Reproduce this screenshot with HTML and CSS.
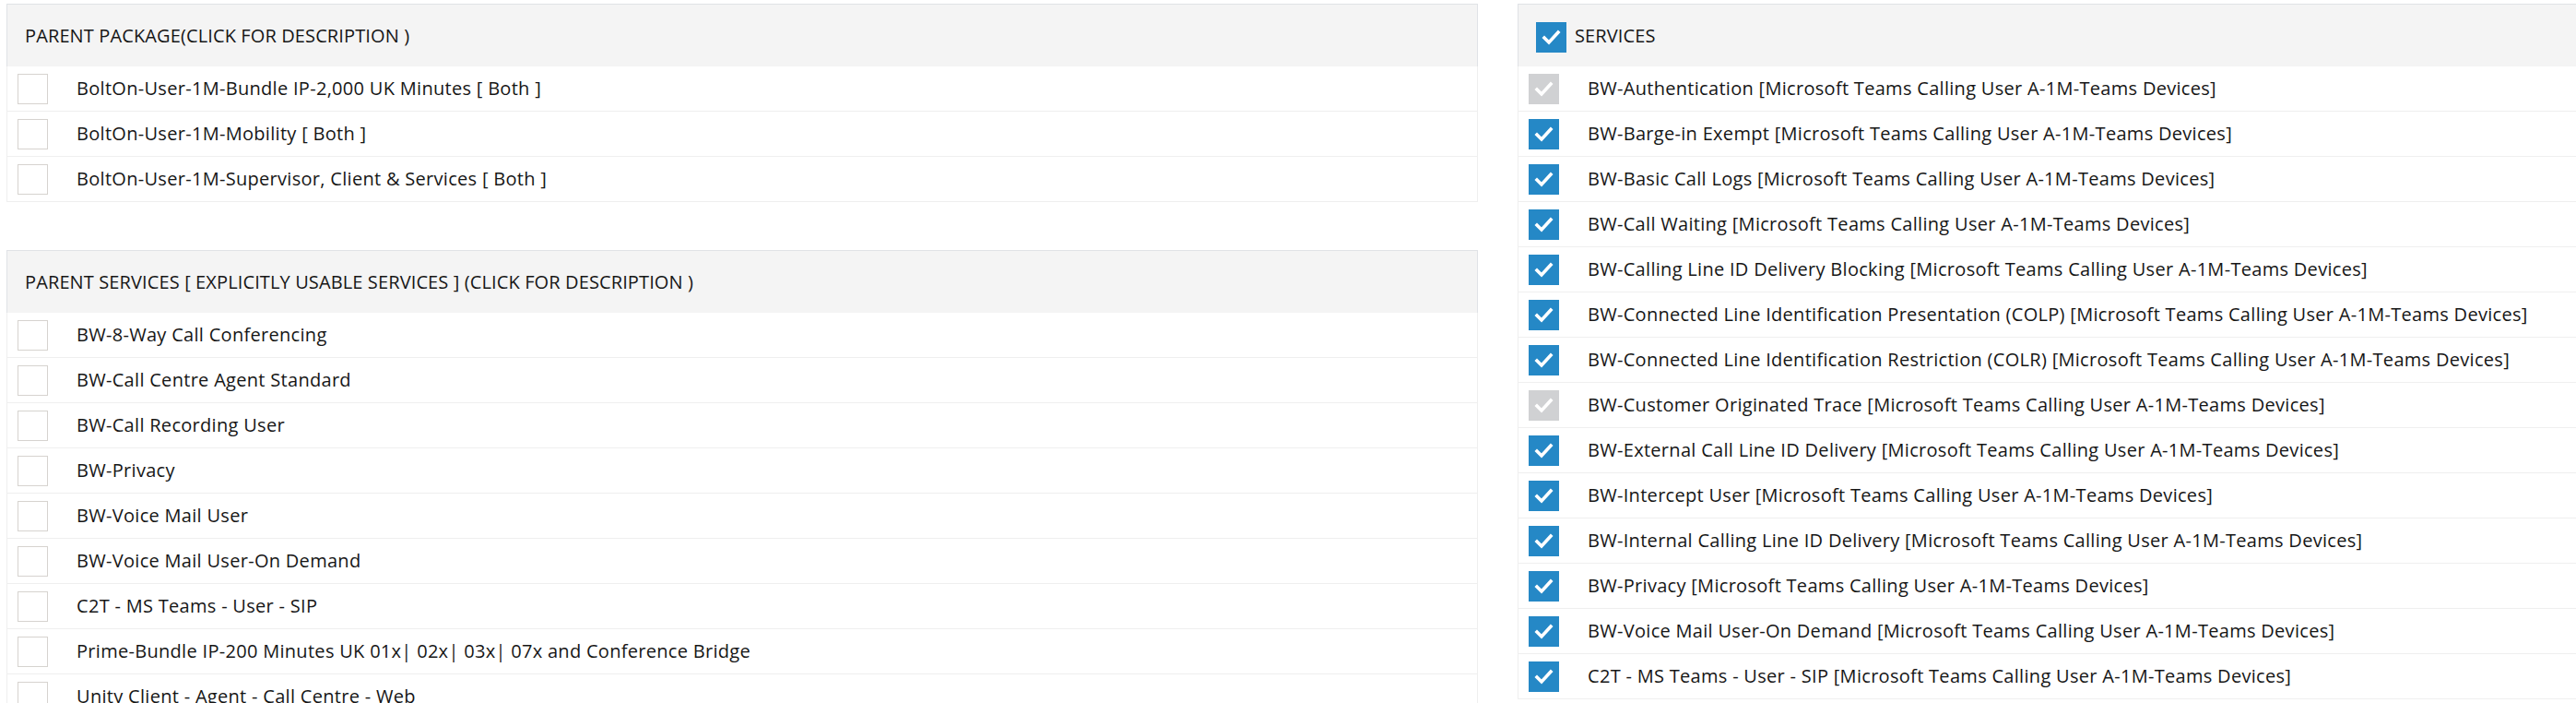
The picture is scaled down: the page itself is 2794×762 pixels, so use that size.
FILE: index.html
```html
<!DOCTYPE html>
<html lang="en">
<head>
<meta charset="utf-8">
<title>Packages and Services</title>
<link rel="stylesheet" href="styles.css">
</head>
<body>
<div class="page">
  <div class="col-left">
    <section class="panel">
      <div class="panel-head">PARENT PACKAGE(CLICK FOR DESCRIPTION )</div>
      <ul class="list">
        <li class="row"><span class="cb"></span><span class="label">BoltOn-User-1M-Bundle IP-2,000 UK Minutes [ Both ]</span></li>
        <li class="row"><span class="cb"></span><span class="label">BoltOn-User-1M-Mobility [ Both ]</span></li>
        <li class="row"><span class="cb"></span><span class="label">BoltOn-User-1M-Supervisor, Client &amp; Services [ Both ]</span></li>
      </ul>
    </section>
    <section class="panel panel-gap">
      <div class="panel-head">PARENT SERVICES [ EXPLICITLY USABLE SERVICES ] (CLICK FOR DESCRIPTION )</div>
      <ul class="list">
        <li class="row"><span class="cb"></span><span class="label">BW-8-Way Call Conferencing</span></li>
        <li class="row"><span class="cb"></span><span class="label">BW-Call Centre Agent Standard</span></li>
        <li class="row"><span class="cb"></span><span class="label">BW-Call Recording User</span></li>
        <li class="row"><span class="cb"></span><span class="label">BW-Privacy</span></li>
        <li class="row"><span class="cb"></span><span class="label">BW-Voice Mail User</span></li>
        <li class="row"><span class="cb"></span><span class="label">BW-Voice Mail User-On Demand</span></li>
        <li class="row"><span class="cb"></span><span class="label">C2T - MS Teams - User - SIP</span></li>
        <li class="row"><span class="cb"></span><span class="label">Prime-Bundle IP-200 Minutes UK 01x| 02x| 03x| 07x and Conference Bridge</span></li>
        <li class="row"><span class="cb"></span><span class="label">Unity Client - Agent - Call Centre - Web</span></li>
      </ul>
    </section>
  </div>

  <section class="panel panel-right">
    <div class="panel-head head-check"><span class="cb checked"><svg viewBox="0 0 33 33"><polyline points="9,17 14,22 24,11"/></svg></span><span class="head-label">SERVICES</span></div>
    <ul class="list">
      <li class="row"><span class="cb checked disabled"><svg viewBox="0 0 33 33"><polyline points="9,17 14,22 24,11"/></svg></span><span class="label">BW-Authentication [Microsoft Teams Calling User A-1M-Teams Devices]</span></li>
      <li class="row"><span class="cb checked"><svg viewBox="0 0 33 33"><polyline points="9,17 14,22 24,11"/></svg></span><span class="label">BW-Barge-in Exempt [Microsoft Teams Calling User A-1M-Teams Devices]</span></li>
      <li class="row"><span class="cb checked"><svg viewBox="0 0 33 33"><polyline points="9,17 14,22 24,11"/></svg></span><span class="label">BW-Basic Call Logs [Microsoft Teams Calling User A-1M-Teams Devices]</span></li>
      <li class="row"><span class="cb checked"><svg viewBox="0 0 33 33"><polyline points="9,17 14,22 24,11"/></svg></span><span class="label">BW-Call Waiting [Microsoft Teams Calling User A-1M-Teams Devices]</span></li>
      <li class="row"><span class="cb checked"><svg viewBox="0 0 33 33"><polyline points="9,17 14,22 24,11"/></svg></span><span class="label">BW-Calling Line ID Delivery Blocking [Microsoft Teams Calling User A-1M-Teams Devices]</span></li>
      <li class="row"><span class="cb checked"><svg viewBox="0 0 33 33"><polyline points="9,17 14,22 24,11"/></svg></span><span class="label">BW-Connected Line Identification Presentation (COLP) [Microsoft Teams Calling User A-1M-Teams Devices]</span></li>
      <li class="row"><span class="cb checked"><svg viewBox="0 0 33 33"><polyline points="9,17 14,22 24,11"/></svg></span><span class="label">BW-Connected Line Identification Restriction (COLR) [Microsoft Teams Calling User A-1M-Teams Devices]</span></li>
      <li class="row"><span class="cb checked disabled"><svg viewBox="0 0 33 33"><polyline points="9,17 14,22 24,11"/></svg></span><span class="label">BW-Customer Originated Trace [Microsoft Teams Calling User A-1M-Teams Devices]</span></li>
      <li class="row"><span class="cb checked"><svg viewBox="0 0 33 33"><polyline points="9,17 14,22 24,11"/></svg></span><span class="label">BW-External Call Line ID Delivery [Microsoft Teams Calling User A-1M-Teams Devices]</span></li>
      <li class="row"><span class="cb checked"><svg viewBox="0 0 33 33"><polyline points="9,17 14,22 24,11"/></svg></span><span class="label">BW-Intercept User [Microsoft Teams Calling User A-1M-Teams Devices]</span></li>
      <li class="row"><span class="cb checked"><svg viewBox="0 0 33 33"><polyline points="9,17 14,22 24,11"/></svg></span><span class="label">BW-Internal Calling Line ID Delivery [Microsoft Teams Calling User A-1M-Teams Devices]</span></li>
      <li class="row"><span class="cb checked"><svg viewBox="0 0 33 33"><polyline points="9,17 14,22 24,11"/></svg></span><span class="label">BW-Privacy [Microsoft Teams Calling User A-1M-Teams Devices]</span></li>
      <li class="row"><span class="cb checked"><svg viewBox="0 0 33 33"><polyline points="9,17 14,22 24,11"/></svg></span><span class="label">BW-Voice Mail User-On Demand [Microsoft Teams Calling User A-1M-Teams Devices]</span></li>
      <li class="row"><span class="cb checked"><svg viewBox="0 0 33 33"><polyline points="9,17 14,22 24,11"/></svg></span><span class="label">C2T - MS Teams - User - SIP [Microsoft Teams Calling User A-1M-Teams Devices]</span></li>
    </ul>
  </section>
</div>
</body>
</html>
```

FILE: styles.css
```css
html, body {
  margin: 0;
  padding: 0;
  overflow: hidden;
  background: #ffffff;
}

body {
  font-family: "Open Sans", Roboto, "Liberation Sans", sans-serif;
  font-size: 20px;
  color: #161616;
}

.page {
  display: flex;
  align-items: flex-start;
  gap: 43px;
  padding: 4px 0 0 7px;
  width: max-content;
}

.col-left {
  width: 1596px;
  display: flex;
  flex-direction: column;
}

.panel {
  display: flex;
  flex-direction: column;
}

.panel-gap {
  margin-top: 52px;
}

.panel-right {
  width: 1596px;
}

.panel-head {
  height: 67px;
  display: flex;
  align-items: center;
  padding-left: 19px;
  background: #f4f4f4;
  border: 1px solid #e0e2e6;
  border-bottom: none;
  white-space: nowrap;
  letter-spacing: 0.12px;
}

.head-check .cb {
  margin-top: 3px;
}

.head-label {
  margin-left: 9px;
}

.list {
  list-style: none;
  margin: 0;
  padding: 0;
}

.row {
  height: 48px;
  display: flex;
  align-items: center;
  padding-left: 11px;
  border: 1px solid #efefef;
  border-top: none;
  white-space: nowrap;
}

.cb {
  flex: none;
  width: 33px;
  height: 33px;
  box-sizing: border-box;
  border: 1px solid #d6d3cf;
  background: #ffffff;
  display: flex;
  align-items: center;
  justify-content: center;
}

.cb svg {
  width: 33px;
  height: 33px;
  display: block;
}

.cb polyline {
  fill: none;
  stroke: #ffffff;
  stroke-width: 3.6;
  stroke-linecap: square;
  stroke-linejoin: miter;
}

.cb.checked {
  background: #2588c6;
  border: none;
}

.cb.disabled {
  background: #d0d1d3;
}

.label {
  margin-left: 31px;
  margin-top: -2px;
  letter-spacing: 0.3px;
}
```
